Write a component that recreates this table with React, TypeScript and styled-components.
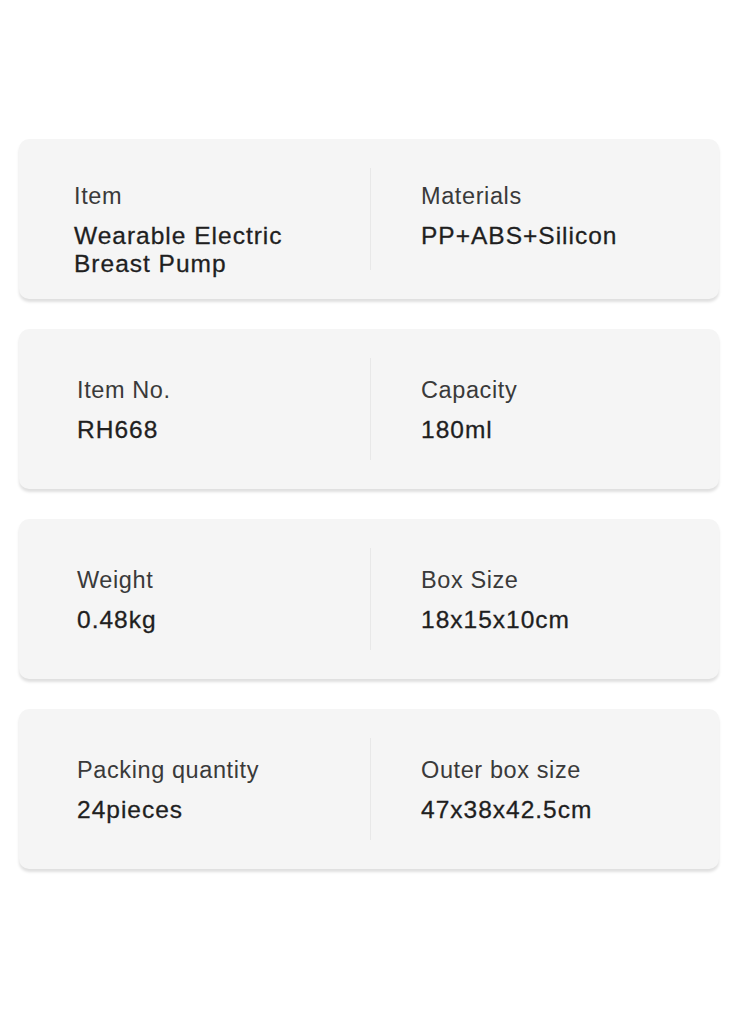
import styled, { createGlobalStyle } from 'styled-components';

const Global = createGlobalStyle`
    html, body {
        margin: 0;
        padding: 0;
        background: #ffffff;
    }
    body {
        font-family: "Liberation Sans", Arial, sans-serif;
    }
`

const Page = styled.main`
    width: 737px;
    min-height: 1010px;
    box-sizing: border-box;
    padding: 139px 18px 0 19px;
    display: flex;
    flex-direction: column;
    gap: 30px;
`

const Card = styled.section`
    height: 160px;
    box-sizing: border-box;
    background: #f5f5f5;
    border-radius: 10px;
    box-shadow: 0 3px 3px rgba(0, 0, 0, 0.13);
    display: grid;
    grid-template-columns: 351px 1px 1fr;
`

const Cell = styled.div<{ $top: number; $left: number }>`
    padding-top: ${p => p.$top}px;
    padding-left: ${p => p.$left}px;
    display: flex;
    flex-direction: column;
    gap: 12px;
`

const Divider = styled.div`
    align-self: center;
    height: 102px;
    background: #e8e8e8;
`

const Label = styled.div`
    font-size: 23.5px;
    line-height: 28px;
    color: #3a3a3a;
    letter-spacing: 0.6px;
`

const Value = styled.div`
    font-size: 24.5px;
    line-height: 28px;
    color: #1f1f1f;
    letter-spacing: 1px;
    -webkit-text-stroke: 0.3px #1f1f1f;
`

type Spec = { label: string; value: React.ReactNode }

const rows: { top: number; left: number; a: Spec; b: Spec }[] = [
    {
        top: 43, left: 55,
        a: { label: 'Item', value: <>Wearable Electric<br />Breast Pump</> },
        b: { label: 'Materials', value: 'PP+ABS+Silicon' },
    },
    {
        top: 47, left: 58,
        a: { label: 'Item No.', value: 'RH668' },
        b: { label: 'Capacity', value: '180ml' },
    },
    {
        top: 47, left: 58,
        a: { label: 'Weight', value: '0.48kg' },
        b: { label: 'Box Size', value: '18x15x10cm' },
    },
    {
        top: 47, left: 58,
        a: { label: 'Packing quantity', value: '24pieces' },
        b: { label: 'Outer box size', value: '47x38x42.5cm' },
    },
]

export default function App() {
    return (
        <>
            <Global />
            <Page>
                {rows.map((r, i) => (
                    <Card key={i}>
                        <Cell $top={r.top} $left={r.left}>
                            <Label>{r.a.label}</Label>
                            <Value>{r.a.value}</Value>
                        </Cell>
                        <Divider />
                        <Cell $top={r.top} $left={50}>
                            <Label>{r.b.label}</Label>
                            <Value>{r.b.value}</Value>
                        </Cell>
                    </Card>
                ))}
            </Page>
        </>
    )
}
